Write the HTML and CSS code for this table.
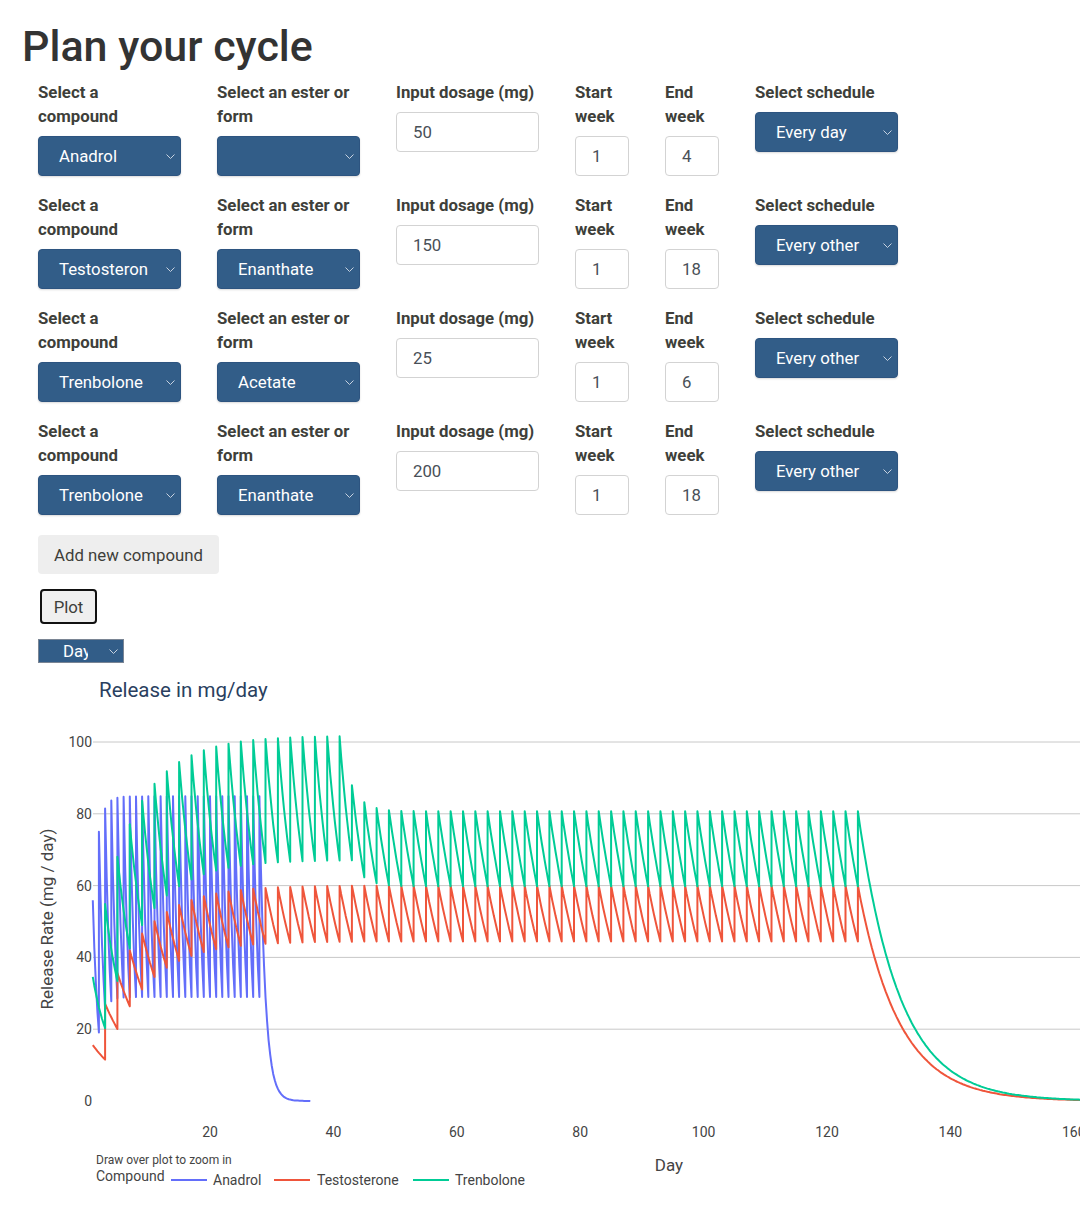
FILE: index.html
```html
<!DOCTYPE html>
<html lang="en">
<head>
<meta charset="utf-8">
<title>Plan your cycle</title>
<link rel="stylesheet" href="styles.css">
</head>
<body>
<main class="page">
  <h1 class="title">Plan your cycle</h1>
  <div class="controls">
    <div class="rows">
      <div class="row">
        <div class="field wide"><label>Select a<br>compound</label><div class="select"><span>Anadrol</span><svg class="chev" width="9" height="5" viewBox="0 0 9 5"><path d="M0.5 0.5L4.5 4.5L8.5 0.5"/></svg></div></div>
        <div class="field wide"><label>Select an ester or<br>form</label><div class="select"><span></span><svg class="chev" width="9" height="5" viewBox="0 0 9 5"><path d="M0.5 0.5L4.5 4.5L8.5 0.5"/></svg></div></div>
        <div class="field wide"><label>Input dosage (mg)</label><div class="input">50</div></div>
        <div class="field narrow"><label>Start<br>week</label><div class="input">1</div></div>
        <div class="field narrow"><label>End<br>week</label><div class="input">4</div></div>
        <div class="field wide"><label>Select schedule</label><div class="select"><span>Every day</span><svg class="chev" width="9" height="5" viewBox="0 0 9 5"><path d="M0.5 0.5L4.5 4.5L8.5 0.5"/></svg></div></div>
      </div>
      <div class="row">
        <div class="field wide"><label>Select a<br>compound</label><div class="select"><span>Testosteron</span><svg class="chev" width="9" height="5" viewBox="0 0 9 5"><path d="M0.5 0.5L4.5 4.5L8.5 0.5"/></svg></div></div>
        <div class="field wide"><label>Select an ester or<br>form</label><div class="select"><span>Enanthate</span><svg class="chev" width="9" height="5" viewBox="0 0 9 5"><path d="M0.5 0.5L4.5 4.5L8.5 0.5"/></svg></div></div>
        <div class="field wide"><label>Input dosage (mg)</label><div class="input">150</div></div>
        <div class="field narrow"><label>Start<br>week</label><div class="input">1</div></div>
        <div class="field narrow"><label>End<br>week</label><div class="input">18</div></div>
        <div class="field wide"><label>Select schedule</label><div class="select"><span>Every other</span><svg class="chev" width="9" height="5" viewBox="0 0 9 5"><path d="M0.5 0.5L4.5 4.5L8.5 0.5"/></svg></div></div>
      </div>
      <div class="row">
        <div class="field wide"><label>Select a<br>compound</label><div class="select"><span>Trenbolone</span><svg class="chev" width="9" height="5" viewBox="0 0 9 5"><path d="M0.5 0.5L4.5 4.5L8.5 0.5"/></svg></div></div>
        <div class="field wide"><label>Select an ester or<br>form</label><div class="select"><span>Acetate</span><svg class="chev" width="9" height="5" viewBox="0 0 9 5"><path d="M0.5 0.5L4.5 4.5L8.5 0.5"/></svg></div></div>
        <div class="field wide"><label>Input dosage (mg)</label><div class="input">25</div></div>
        <div class="field narrow"><label>Start<br>week</label><div class="input">1</div></div>
        <div class="field narrow"><label>End<br>week</label><div class="input">6</div></div>
        <div class="field wide"><label>Select schedule</label><div class="select"><span>Every other</span><svg class="chev" width="9" height="5" viewBox="0 0 9 5"><path d="M0.5 0.5L4.5 4.5L8.5 0.5"/></svg></div></div>
      </div>
      <div class="row">
        <div class="field wide"><label>Select a<br>compound</label><div class="select"><span>Trenbolone</span><svg class="chev" width="9" height="5" viewBox="0 0 9 5"><path d="M0.5 0.5L4.5 4.5L8.5 0.5"/></svg></div></div>
        <div class="field wide"><label>Select an ester or<br>form</label><div class="select"><span>Enanthate</span><svg class="chev" width="9" height="5" viewBox="0 0 9 5"><path d="M0.5 0.5L4.5 4.5L8.5 0.5"/></svg></div></div>
        <div class="field wide"><label>Input dosage (mg)</label><div class="input">200</div></div>
        <div class="field narrow"><label>Start<br>week</label><div class="input">1</div></div>
        <div class="field narrow"><label>End<br>week</label><div class="input">18</div></div>
        <div class="field wide"><label>Select schedule</label><div class="select"><span>Every other</span><svg class="chev" width="9" height="5" viewBox="0 0 9 5"><path d="M0.5 0.5L4.5 4.5L8.5 0.5"/></svg></div></div>
      </div>
    </div>
    <button class="btn-add" type="button">Add new compound</button>
    <button class="btn-plot" type="button">Plot</button>
    <div class="unit-select"><span class="unit-text">Day</span><svg class="chev" width="9" height="5" viewBox="0 0 9 5"><path d="M0.5 0.5L4.5 4.5L8.5 0.5"/></svg></div>
  </div>
  <div class="chart">
    <svg id="chart" class="chart-svg" width="1200" height="540" viewBox="0 670 1200 540">
      <text class="chart-title" x="99" y="697">Release in mg/day</text>
      <g id="grid" class="grid"></g>
      <g id="yticks" class="tick"></g>
      <g id="xticks" class="tick"></g>
      <text class="axis-title" transform="translate(53 919) rotate(-90)" text-anchor="middle">Release Rate (mg / day)</text>
      <text class="axis-title" x="669" y="1171" text-anchor="middle">Day</text>
      <g id="traces"></g>
      <text class="hint" x="96" y="1164">Draw over plot to zoom in</text>
      <text class="legend-text" x="96" y="1181">Compound</text>
      <line class="leg-line" x1="171" y1="1180" x2="207" y2="1180" stroke="#636efa"/>
      <text class="legend-text" x="213" y="1185">Anadrol</text>
      <line class="leg-line" x1="274" y1="1180" x2="310" y2="1180" stroke="#ef553b"/>
      <text class="legend-text" x="317" y="1185">Testosterone</text>
      <line class="leg-line" x1="413" y1="1180" x2="449" y2="1180" stroke="#00cc96"/>
      <text class="legend-text" x="455" y="1185">Trenbolone</text>
    </svg>
  </div>
</main>
<script src="script.js"></script>
</body>
</html>
```

FILE: styles.css
```css
html, body {
  margin: 0;
  padding: 0;
  background: #ffffff;
  overflow: hidden;
}
body {
  font-family: Roboto, "Liberation Sans", Arial, sans-serif;
  color: #3e3f3a;
  font-size: 16.8px;
}
.title {
  margin: 20px 0 8px 22px;
  font-size: 43px;
  line-height: 52px;
  font-weight: 500;
  color: #333333;
}
.controls {
  padding-left: 38px;
  display: flex;
  flex-direction: column;
  align-items: flex-start;
}
.rows {
  display: flex;
  flex-direction: column;
  gap: 17px;
}
.row {
  display: flex;
  gap: 36px;
  align-items: flex-start;
}
.field.wide { width: 143px; }
.field.narrow { width: 54px; }
.field label {
  display: block;
  font-weight: 700;
  font-size: 16.8px;
  line-height: 24px;
  margin-bottom: 8px;
  color: #3e3f3a;
  white-space: nowrap;
}
.select {
  box-sizing: border-box;
  height: 40px;
  display: flex;
  align-items: center;
  justify-content: space-between;
  padding: 0 5px 0 20px;
  background: #325d88;
  border: 1px solid #2d5480;
  border-radius: 4px;
  color: #ffffff;
  font-size: 16.8px;
  box-shadow: 0 1px 2px rgba(0,0,0,0.15);
}
.chev path {
  fill: none;
  stroke: #c7d2e0;
  stroke-width: 1;
}
.input {
  box-sizing: border-box;
  height: 40px;
  display: flex;
  align-items: center;
  padding-left: 16px;
  border: 1px solid #d3d3d3;
  border-radius: 4px;
  background: #ffffff;
  color: #495057;
  font-size: 16.8px;
}
.btn-add {
  margin-top: 20px;
  height: 39px;
  padding: 0 16px;
  border: none;
  border-radius: 4px;
  background: #eeeeee;
  color: #3e3f3a;
  font-family: Roboto, "Liberation Sans", Arial, sans-serif;
  font-size: 16.8px;
}
.btn-plot {
  margin: 15px 0 0 2px;
  width: 57px;
  height: 35px;
  padding: 0;
  border: 2px solid #111111;
  border-radius: 4px;
  background: #efefef;
  color: #3e3f3a;
  font-family: Roboto, "Liberation Sans", Arial, sans-serif;
  font-size: 16.8px;
}
.unit-select {
  margin-top: 15px;
  box-sizing: border-box;
  width: 86px;
  height: 24px;
  display: flex;
  align-items: center;
  justify-content: space-between;
  padding: 0 5px 0 24px;
  background: #325d88;
  border: 1px solid #7a8594;
  color: #ffffff;
}
.unit-text {
  width: 25px;
  overflow: hidden;
  white-space: nowrap;
  font-size: 16.8px;
  line-height: 22px;
}
.chart {
  margin-top: 7px;
  width: 100%;
  height: 540px;
  overflow: hidden;
}
.chart-svg {
  display: block;
  font-family: Roboto, "Liberation Sans", Arial, sans-serif;
}
.chart-title {
  font-size: 20.5px;
  fill: #2a3f5f;
}
.grid line {
  stroke: #c8c8c8;
  stroke-width: 1;
}
.tick text {
  font-size: 14px;
  fill: #444444;
}
.axis-title {
  font-size: 17px;
  fill: #444444;
}
.hint {
  font-size: 12px;
  fill: #444444;
}
.legend-text {
  font-size: 14px;
  fill: #444444;
}
.leg-line {
  stroke-width: 2;
}
.trace {
  fill: none;
  stroke-width: 2;
  stroke-linejoin: round;
}
```

FILE: script.js
```js
(function () {
  var NS = 'http://www.w3.org/2000/svg';
  var X0 = 86.6, SX = 6.17, Y0 = 1101, SY = 3.59;
  function fx(t) { return X0 + SX * t; }
  function fy(v) { return Y0 - SY * v; }

  function el(name, attrs, text) {
    var e = document.createElementNS(NS, name);
    for (var k in attrs) e.setAttribute(k, attrs[k]);
    if (text !== undefined) e.textContent = text;
    return e;
  }

  var grid = document.getElementById('grid');
  var yt = document.getElementById('yticks');
  var xt = document.getElementById('xticks');
  [0, 20, 40, 60, 80, 100].forEach(function (v) {
    var y = fy(v);
    if (v > 0) grid.appendChild(el('line', { x1: 93, y1: y.toFixed(1), x2: 1200, y2: y.toFixed(1) }));
    yt.appendChild(el('text', { x: 92, y: (y + 5).toFixed(1), 'text-anchor': 'end' }, String(v)));
  });
  [20, 40, 60, 80, 100, 120, 140, 160].forEach(function (t) {
    xt.appendChild(el('text', { x: fx(t).toFixed(1), y: 1137, 'text-anchor': 'middle' }, String(t)));
  });

  function rate(t, doses) {
    var s = 0;
    for (var i = 0; i < doses.length; i++) {
      var d = doses[i];
      if (d.t <= t) s += d.D * d.k * Math.exp(-d.k * (t - d.t));
    }
    return s;
  }
  function build(doses, tEnd) {
    var times = {};
    doses.forEach(function (d) { times[d.t] = true; });
    var pts = [];
    for (var i = 0; ; i++) {
      var t = 1 + i * 0.25;
      if (t > tEnd) break;
      if (times[t] && t > 1) pts.push([t, rate(t - 1e-9, doses)]);
      pts.push([t, rate(t, doses)]);
    }
    return 'M' + pts.map(function (p) { return fx(p[0]).toFixed(1) + ' ' + fy(p[1]).toFixed(1); }).join('L');
  }

  var anadrol = [], test = [], tren = [];
  for (var n = 1; n <= 28; n++) anadrol.push({ t: n, D: 52, k: 1.075 });
  for (var m = 1; m <= 125; m += 2) {
    test.push({ t: m, D: 103.7, k: 0.15 });
    tren.push({ t: m, D: 139.5, k: 0.15 });
    if (m <= 41) tren.push({ t: m, D: 26, k: 0.525 });
  }

  var traces = document.getElementById('traces');
  traces.appendChild(el('path', { d: build(anadrol, 36.25), class: 'trace', stroke: '#636efa' }));
  traces.appendChild(el('path', { d: build(test, 180), class: 'trace', stroke: '#ef553b' }));
  traces.appendChild(el('path', { d: build(tren, 180), class: 'trace', stroke: '#00cc96' }));
})();
```
